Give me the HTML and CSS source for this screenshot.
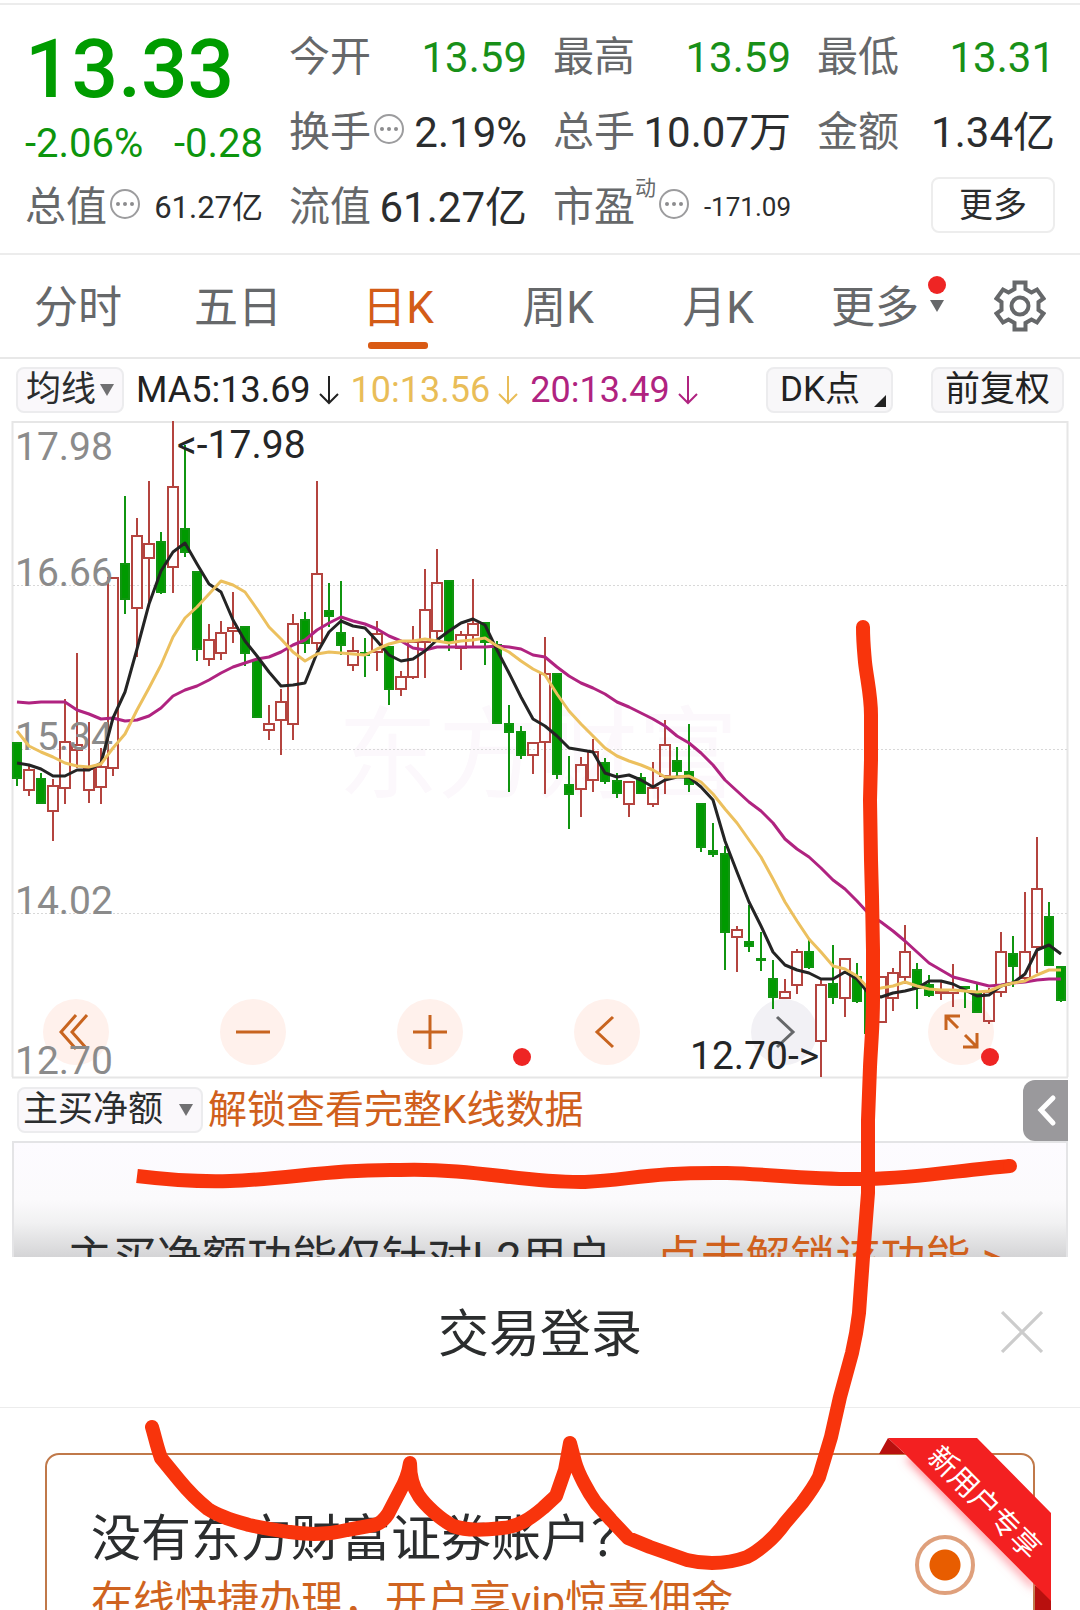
FILE: index.html
```html
<!DOCTYPE html>
<html lang="zh-CN">
<head>
<meta charset="utf-8">
<meta name="viewport" content="width=device-width, initial-scale=1">
<title>日K 行情</title>
<link rel="stylesheet" href="styles.css">
</head>
<body>
<div class="app">
  <header class="quote">
    <div class="quote-price">
      <strong class="price">13.33</strong>
      <div class="change"><span>-2.06%</span><span>-0.28</span></div>
    </div>
    <div class="cell"><span class="key">今开</span><span class="val down">13.59</span></div>
    <div class="cell"><span class="key">最高</span><span class="val down">13.59</span></div>
    <div class="cell"><span class="key">最低</span><span class="val down">13.31</span></div>
    <div class="cell"><span class="key">换手<svg class="info" viewBox="0 0 30 30"><circle class="ring" cx="15" cy="15" r="14"/><circle cx="8" cy="15" r="2"/><circle cx="15" cy="15" r="2"/><circle cx="22" cy="15" r="2"/></svg></span><span class="val">2.19%</span></div>
    <div class="cell"><span class="key">总手</span><span class="val">10.07万</span></div>
    <div class="cell"><span class="key">金额</span><span class="val">1.34亿</span></div>
    <div class="cell"><span class="key">总值<svg class="info" viewBox="0 0 30 30"><circle class="ring" cx="15" cy="15" r="14"/><circle cx="8" cy="15" r="2"/><circle cx="15" cy="15" r="2"/><circle cx="22" cy="15" r="2"/></svg></span><span class="val mid">61.27亿</span></div>
    <div class="cell"><span class="key">流值</span><span class="val">61.27亿</span></div>
    <div class="cell"><span class="key">市盈<sup>动</sup><svg class="info" viewBox="0 0 30 30"><circle class="ring" cx="15" cy="15" r="14"/><circle cx="8" cy="15" r="2"/><circle cx="15" cy="15" r="2"/><circle cx="22" cy="15" r="2"/></svg></span><span class="val small">-171.09</span></div>
    <div class="cell cell-end"><button class="more" type="button">更多</button></div>
  </header>

  <nav class="tabs">
    <button class="tab" type="button">分时</button>
    <button class="tab" type="button">五日</button>
    <button class="tab active" type="button">日K</button>
    <button class="tab" type="button">周K</button>
    <button class="tab" type="button">月K</button>
    <button class="tab has-menu" type="button">更多</button>
    <button class="gear" type="button" aria-label="设置">
      <svg viewBox="0 0 52 52"><path d="M20.500 2.500H31.500V9L37.500 12.500L43 9.500L49.500 18.500L44.500 22V30L49.500 33.500L43 42.500L37.500 39.500L31.500 43V49.500H20.500V43L14.500 39.500L9 42.500L2.500 33.500L7.500 30V22L2.500 18.500L9 9.500L14.500 12.500L20.500 9Z"/><circle cx="26" cy="26" r="8.500"/></svg>
    </button>
  </nav>

  <section class="averages">
    <span class="picker"><select aria-label="均线"><option>均线</option></select></span>
    <span class="ma ma5">MA5:13.69<svg viewBox="0 0 20 30"><path d="M10 1V28M1 19L10 28L19 19"/></svg></span>
    <span class="ma ma10">10:13.56<svg viewBox="0 0 20 30"><path d="M10 1V28M1 19L10 28L19 19"/></svg></span>
    <span class="ma ma20">20:13.49<svg viewBox="0 0 20 30"><path d="M10 1V28M1 19L10 28L19 19"/></svg></span>
    <button class="chip chip-dk" type="button">DK点</button>
    <button class="chip" type="button">前复权</button>
  </section>

  <section class="chart">
    <div class="chart-tools">
      <button class="tool" type="button" aria-label="最早"><svg viewBox="0 0 66 66"><path d="M33 16L18 33L33 50M44 16L29 33L44 50"/></svg></button>
      <button class="tool" type="button" aria-label="缩小"><svg viewBox="0 0 66 66"><path d="M16 33H50"/></svg></button>
      <button class="tool" type="button" aria-label="放大"><svg viewBox="0 0 66 66"><path d="M16 33H50M33 16V50"/></svg></button>
      <button class="tool" type="button" aria-label="向左"><svg viewBox="0 0 66 66"><path d="M39 18L23 33L39 48"/></svg></button>
      <button class="tool off" type="button" aria-label="向右"><svg viewBox="0 0 66 66"><path d="M26 18L42 33L26 48"/></svg></button>
      <button class="tool" type="button" aria-label="全屏"><svg viewBox="0 0 66 66"><path d="M18 31V17H32M18 17L30 29M49 34V48H35M49 48L37 36"/></svg></button>
    </div>
    <svg class="plot" viewBox="0 421 1080 658" role="img" aria-label="日K线图">
      <text class="watermark" x="338" y="790">东方财富</text>
      <path class="frame" d="M12.500 1077V422H1067.500V1077M12 1077.500H1068"/>
      <path class="grid" d="M13 585.500H1067M13 749.500H1067M13 913.500H1067"/>
      <g id="candles"></g>
      <g class="scale">
        <text x="15" y="460">17.98</text>
        <text x="15" y="586">16.66</text>
        <text x="15" y="750">15.34</text>
        <text x="15" y="914">14.02</text>
        <text x="15" y="1074">12.70</text>
      </g>
      <g class="mark">
        <text x="177" y="458">&lt;-17.98</text>
        <text x="690" y="1069">12.70-&gt;</text>
      </g>
      <g id="lines"></g>
      <circle class="dot" cx="522" cy="1057" r="9"/>
      <circle class="dot" cx="990" cy="1057" r="9"/>
    </svg>
  </section>

  <section class="indicator">
    <span class="picker wide"><select aria-label="指标"><option>主买净额</option></select></span>
    <a class="unlock" href="#unlock">解锁查看完整K线数据</a>
    <button class="drawer" type="button" aria-label="展开"><svg viewBox="0 0 45 60"><path d="M30 18L18 30L30 43"/></svg></button>
  </section>

  <section class="locked">
    <span>主买净额功能仅针对L2用户</span>
    <a href="#unlock">点击解锁该功能 &gt;</a>
  </section>

  <section class="sheet">
    <div class="sheet-head">
      <h2>交易登录</h2>
      <button class="close" type="button" aria-label="关闭"><svg viewBox="0 0 40 40"><path d="M1 1L39 39M39 1L1 39"/></svg></button>
    </div>
    <div class="offer">
      <label class="offer-text" for="open-account"><span class="offer-title">没有东方财富证券账户？</span><span class="offer-note">在线快捷办理，开户享vip惊喜佣金</span></label>
      <input id="open-account" class="offer-radio" type="radio" name="account" checked>
      <svg class="ribbon" viewBox="0 0 180 200">
        <defs><filter id="soft" x="-20%" y="-20%" width="140%" height="140%"><feGaussianBlur stdDeviation="5"/></filter></defs>
        <path class="glow" d="M28 20L158 152V144L40 16Z" filter="url(#soft)"/>
        <path class="fold" d="M11 0L2 16H28Z"/>
        <path class="fold" d="M158 147V200H174V160Z"/>
        <path class="band" d="M11 0H100L174 75V163L158 147L27 15Z"/>
        <text transform="translate(108 64) rotate(45)" text-anchor="middle" y="11">新用户专享</text>
      </svg>
    </div>
  </section>

  <svg class="scribble" viewBox="0 0 1080 1610" aria-hidden="true">
    <path d="M863 627C863 642 864 650 865 662C867 680 871 695 871 715L871 760L870 800L871 860L872 897L873 950L873 1000C873 1025 871 1045 870 1067L868 1120L868 1193L863 1257L859 1313C857 1330 855 1340 852 1353L840 1397L831 1437L819 1477C815 1485 808 1495 802 1503L785 1523C780 1530 774 1537 767 1543C760 1549 753 1554 747 1557C736 1561 724 1563 712 1563C703 1563 695 1562 687 1560L650 1547L628 1538L611 1520L596 1503C588 1492 578 1473 575 1462L570 1443L565 1470L556 1496L543 1508C530 1519 518 1527 502 1528C484 1530 468 1531 453 1526C440 1519 425 1505 419 1496C412 1486 410 1476 410 1463C408 1476 404 1484 400 1491L388 1514C384 1520 380 1524 374 1525L347 1530C335 1533 325 1534 314 1534C290 1533 268 1529 249 1525C235 1521 220 1517 208 1509C198 1501 188 1491 179 1480L161 1458C157 1447 155 1437 152 1427"/>
    <path class="butt" d="M137 1176C170 1180 200 1182 230 1181C290 1179 330 1169 400 1170C480 1168 520 1183 585 1182C630 1180 650 1172 727 1173C770 1174 810 1180 867 1179C920 1178 960 1170 1010 1166"/>
    <circle cx="1010" cy="1166" r="7"/>
  </svg>
</div>
<script src="chart.js"></script>
</body>
</html>
```
FILE: styles.css
```css
* { box-sizing: border-box; }
body {
  margin: 0;
  background: #fff;
  color: #2b2d2e;
  font-family: Roboto, "Noto Sans CJK SC", sans-serif;
}
button, select {
  margin: 0;
  padding: 0;
  border: 0;
  background: none;
  color: inherit;
  font: inherit;
}
a { color: #d0601c; text-decoration: none; }
svg { display: block; }

.app {
  position: relative;
  height: 100vh;
  padding-top: 3px;
  overflow: hidden;
}

/* quote header */
.quote {
  display: grid;
  grid-template-columns: repeat(4, 1fr);
  grid-template-rows: repeat(3, 75px);
  column-gap: 26px;
  padding: 15px 25px 8px;
  border-top: 2px solid #ececec;
  border-bottom: 2px solid #ececec;
}
.quote-price {
  grid-row: span 2;
  display: flex;
  flex-direction: column;
  color: #0d950d;
}
.price {
  height: 98px;
  font-size: 82px;
  font-weight: 500;
  line-height: 98px;
  color: #009c00;
}
.change {
  display: flex;
  justify-content: space-between;
  font-size: 40px;
  line-height: 52px;
}
.cell {
  display: flex;
  align-items: center;
  justify-content: space-between;
  font-size: 41px;
  line-height: 75px;
  white-space: nowrap;
}
.cell-end { justify-content: flex-end; }
.key { display: flex; align-items: center; color: #66686a; }
.key sup {
  align-self: flex-start;
  font-size: 21px;
  line-height: 36px;
}
.val { font-size: 42px; }
.val.down { color: #189018; }
.val.mid { font-size: 31px; }
.val.small { font-size: 26px; }
.info {
  width: 30px;
  height: 30px;
  margin: 0 0 8px 3px;
  fill: #8c8c8e;
}
.info .ring { fill: none; stroke: #9c9c9e; stroke-width: 2; }
.more {
  width: 124px;
  height: 56px;
  margin-bottom: 6px;
  border: 2px solid #ededed;
  border-radius: 8px;
  font-size: 34px;
  line-height: 48px;
}

/* period tabs */
.tabs {
  display: grid;
  grid-template-columns: repeat(6, 4fr) 3fr;
  height: 104px;
  border-bottom: 2px solid #e8e8e8;
}
.tab {
  position: relative;
  padding: 4px 4px 0 0;
  font-size: 44px;
  line-height: 98px;
  color: #66686a;
}
.tab.active { color: #d35c17; }
.tab.active::after {
  content: "";
  position: absolute;
  left: 50%;
  bottom: 8px;
  width: 60px;
  height: 7px;
  margin-left: -32px;
  border-radius: 3px;
  background: #d95a14;
}
.has-menu { padding-right: 10px; }
.has-menu::before {
  content: "";
  position: absolute;
  top: 21px;
  right: 14px;
  width: 18px;
  height: 18px;
  border-radius: 50%;
  background: #ee2524;
}
.has-menu::after {
  content: "";
  position: absolute;
  top: 45px;
  right: 16px;
  border: solid transparent;
  border-width: 12px 7px 0;
  border-top-color: #66686a;
}
.gear { display: flex; align-items: center; justify-content: center; }
.gear svg { width: 52px; height: 52px; fill: none; stroke: #66686a; stroke-width: 4; }

/* moving averages */
.averages {
  display: flex;
  align-items: center;
  height: 62px;
  padding: 0 16px;
  font-size: 35px;
}
.picker { position: relative; display: block; }
.picker select {
  display: block;
  width: 108px;
  height: 46px;
  padding-left: 8px;
  border: 2px solid #ececee;
  border-radius: 8px;
  background: #faf8fb;
  appearance: none;
  font-size: 35px;
  line-height: 42px;
}
.picker::after {
  content: "";
  position: absolute;
  top: 17px;
  right: 10px;
  border: solid transparent;
  border-width: 12px 7px 0;
  border-top-color: #707072;
  pointer-events: none;
}
.picker.wide select { width: 186px; padding-left: 4px; }
.ma { display: flex; align-items: center; margin-left: 12px; font-size: 36px; }
.ma svg {
  width: 20px;
  height: 30px;
  margin-left: 8px;
  fill: none;
  stroke: currentColor;
  stroke-width: 2;
}
.ma5 { color: #222; }
.ma10 { color: #e9bd58; }
.ma20 { color: #b02380; }
.chip {
  position: relative;
  width: 133px;
  height: 46px;
  border: 2px solid #ececee;
  border-radius: 8px;
  background: #f8f7f9;
  color: #222;
  font-size: 35px;
  line-height: 42px;
}
.chip-dk {
  width: 127px;
  margin: 0 38px 0 auto;
  padding-left: 12px;
  text-align: left;
}
.chip-dk::after {
  content: "";
  position: absolute;
  right: 5px;
  bottom: 4px;
  width: 12px;
  height: 12px;
  background: #222;
  clip-path: polygon(100% 0, 100% 100%, 0 100%);
}

/* candlestick chart */
.chart { position: relative; }
.plot { position: relative; width: 100%; height: auto; pointer-events: none; }
.frame { fill: none; stroke: #e6e6e6; stroke-width: 2; }
.grid { fill: none; stroke: #d8d8d8; stroke-width: 1; stroke-dasharray: 2 2; }
.plot text { font-size: 39px; }
.scale { fill: #8b8b8b; }
.mark { fill: #242627; }
.plot .watermark { font-size: 100px; fill: #fcf8fc; }
.up { fill: none; stroke: #b4443f; stroke-width: 2; }
.fall { fill: #009a00; stroke: #109510; stroke-width: 2; }
.line { fill: none; stroke-width: 3; stroke-linejoin: round; }
.line-5 { stroke: #242424; }
.line-10 { stroke: #ecc05e; }
.line-20 { stroke: #b02380; }
.dot { fill: #ee2524; }
.chart-tools {
  position: absolute;
  right: 8%;
  bottom: 14px;
  left: 4%;
  display: flex;
  justify-content: space-between;
}
.tool { width: 66px; height: 66px; border-radius: 50%; background: #fff1ec; }
.tool svg { width: 66px; height: 66px; fill: none; stroke: #c8641f; stroke-width: 3; }
.tool.off { background: #f2f1f5; }
.tool.off svg { stroke: #66686a; }

/* indicator bar */
.indicator {
  display: flex;
  align-items: center;
  height: 62px;
  padding: 0 12px 0 17px;
}
.unlock { margin-left: 5px; font-size: 39px; line-height: 60px; }
.drawer {
  width: 45px;
  height: 61px;
  margin-left: auto;
  border-radius: 12px 0 0 12px;
  background: #9a999c;
}
.drawer svg { width: 45px; height: 60px; fill: none; stroke: #fff; stroke-width: 5; stroke-linecap: round; }
.locked {
  display: flex;
  gap: 44px;
  height: 116px;
  margin: 0 12px;
  padding: 84px 0 0 53px;
  border: solid #e4e4e6;
  border-width: 2px 2px 0;
  overflow: hidden;
  background: linear-gradient(#fdfbff 0, #fbfafc 50%, #f1f1f2 70%, #d4d4d6 100%);
  font-size: 45px;
  line-height: 64px;
  white-space: nowrap;
}

/* login sheet */
.sheet { position: relative; background: #fff; }
.sheet-head {
  position: relative;
  height: 151px;
  border-bottom: 1px solid #ececec;
}
.sheet-head h2 {
  margin: 0;
  font-size: 51px;
  font-weight: 400;
  line-height: 156px;
  text-align: center;
}
.close { position: absolute; top: 54px; right: 37px; width: 42px; height: 42px; }
.close svg { width: 42px; height: 42px; fill: none; stroke: #ccc; stroke-width: 3; }
.offer {
  position: relative;
  display: flex;
  justify-content: space-between;
  margin: 45px 45px 0;
  padding: 48px 58px 40px 44px;
  border: 2px solid #c0794a;
  border-radius: 14px;
}
.offer-text { display: flex; flex-direction: column; white-space: nowrap; }
.offer-title { font-size: 50px; line-height: 72px; }
.offer-note { font-size: 42px; line-height: 54px; color: #cf6320; }
.offer-radio {
  width: 60px;
  height: 60px;
  margin: 32px 0 0;
  border: 4px solid #dfa07c;
  border-radius: 50%;
  appearance: none;
  background: radial-gradient(circle, #e85d00 0 15px, #fff 16px);
}
.ribbon { position: absolute; top: -17px; right: -24px; width: 180px; height: 200px; }
.band { fill: #f32021; }
.fold { fill: #b8100e; }
.glow { fill: #ff8a94; }
.ribbon text { fill: #fff; font-size: 29px; }

/* freehand annotation */
.scribble {
  position: absolute;
  top: 0;
  left: 0;
  width: 100%;
  pointer-events: none;
}
.scribble path {
  fill: none;
  stroke: #f8340c;
  stroke-width: 14;
  stroke-linecap: round;
  stroke-linejoin: round;
}
.scribble .butt { stroke-linecap: butt; }
.scribble circle { fill: #f8340c; }
```
FILE: chart.js
```js
// One row per day: direction (1 up, 0 down), high, body top, body bottom, low.
const days = [
  [0,743,743,778,786],[1,765,770,790,796],[0,773,779,803,804],[1,779,786,811,841],
  [1,699,742,788,804],[1,653,745,750,768],[1,722,769,790,803],[1,748,767,787,804],
  [1,578,578,768,776],[0,496,564,599,614],[1,518,536,608,657],[1,481,544,558,602],
  [0,532,542,592,594],[1,421,487,567,593],[0,445,529,552,557],[0,572,572,649,661],
  [1,624,640,659,666],[1,621,633,653,660],[1,592,628,631,643],[0,627,627,653,666],
  [0,660,661,717,717],[1,705,724,730,740],[1,689,702,720,755],[1,614,624,724,740],
  [0,612,620,643,653],[1,481,574,643,650],[0,583,611,616,627],[0,581,633,645,655],
  [1,637,651,665,671],[0,638,653,655,677],[1,621,634,652,671],[0,647,647,689,705],
  [1,671,677,689,696],[1,626,642,677,679],[1,569,610,642,678],[1,549,583,631,638],
  [0,580,581,642,651],[1,631,635,648,670],[1,579,624,635,646],[0,622,623,642,665],
  [0,641,645,723,723],[0,705,724,732,792],[0,726,732,755,759],[1,743,743,755,774],
  [1,637,674,742,794],[0,673,674,774,779],[0,756,785,794,829],[1,757,765,789,817],
  [1,739,752,780,792],[0,758,763,781,784],[0,773,781,793,798],[1,782,782,804,817],
  [0,773,778,793,794],[1,762,788,804,807],[1,720,745,776,794],[0,747,761,771,776],
  [0,724,772,784,792],[0,803,804,847,852],[0,823,851,854,857],[0,846,854,932,970],
  [1,926,930,937,972],[0,905,942,946,952],[0,932,959,960,971],[0,960,979,997,1009],
  [1,979,992,998,998],[1,949,952,985,994],[0,938,952,967,969],[1,980,985,1041,1077],
  [0,945,984,997,1004],[1,959,959,998,1017],[0,963,977,1001,1003],[0,985,990,1033,1033],
  [1,977,977,1022,1022],[1,968,973,998,1011],[1,925,952,977,984],[0,963,970,988,1009],
  [0,975,985,995,997],[1,981,992,993,1000],[1,964,990,993,1007],[0,986,987,988,1008],
  [0,982,992,1012,1012],[1,988,992,1021,1024],[1,932,952,992,997],[0,936,954,966,987],
  [1,892,952,978,980],[1,837,889,947,973],[0,902,917,965,966],[0,967,967,1000,1002]
];

const averages = {
  5: [763,765,769,776,776,770,770,763,718,692,649,604,571,552,543,564,584,592,620,641,656,672,686,685,683,653,632,621,626,628,641,655,661,659,651,640,631,623,619,625,650,673,697,719,726,736,748,750,752,773,777,775,780,787,780,777,777,787,800,841,872,902,926,952,965,970,973,979,979,972,979,994,997,993,991,988,981,981,984,990,996,995,986,983,974,950,945,954],
  10: [731,746,752,757,763,766,767,764,748,734,710,688,665,637,618,607,594,581,585,592,609,627,639,652,661,654,652,653,654,655,649,644,641,641,639,641,643,641,640,638,646,652,661,669,675,694,711,724,736,748,756,761,765,770,777,777,776,782,794,809,823,840,857,879,902,921,939,952,966,969,976,989,988,986,982,986,989,990,990,991,992,991,986,983,981,975,970,970],
  20: [702,703,702,702,702,710,714,719,718,721,720,716,708,696,690,686,680,673,667,663,659,657,652,645,640,630,623,617,621,624,629,636,641,648,650,647,647,647,647,647,646,647,649,655,657,667,676,683,688,694,702,707,713,719,726,736,743,753,765,780,791,802,811,823,839,849,857,868,880,889,901,914,922,931,941,952,963,970,977,980,983,986,985,983,982,980,979,979]
};

const SVG = "http://www.w3.org/2000/svg";
const dayX = (i) => 17 + i * 12;

function addPath(parentId, className, d) {
  const path = document.createElementNS(SVG, "path");
  path.setAttribute("class", className);
  path.setAttribute("d", d);
  document.getElementById(parentId).appendChild(path);
}

days.forEach(([up, high, top, bottom, low], i) => {
  const x = dayX(i);
  const half = up ? 5 : 4;
  const body = `M${x - half} ${top}H${x + half}V${bottom}H${x - half}Z`;
  addPath("candles", up ? "up" : "fall", `M${x} ${high}V${top}M${x} ${bottom}V${low}${body}`);
});

[20, 5, 10].forEach((period) => {
  const points = averages[period].map((y, i) => `${dayX(i)} ${y}`);
  addPath("lines", `line line-${period}`, "M" + points.join("L"));
});
```
